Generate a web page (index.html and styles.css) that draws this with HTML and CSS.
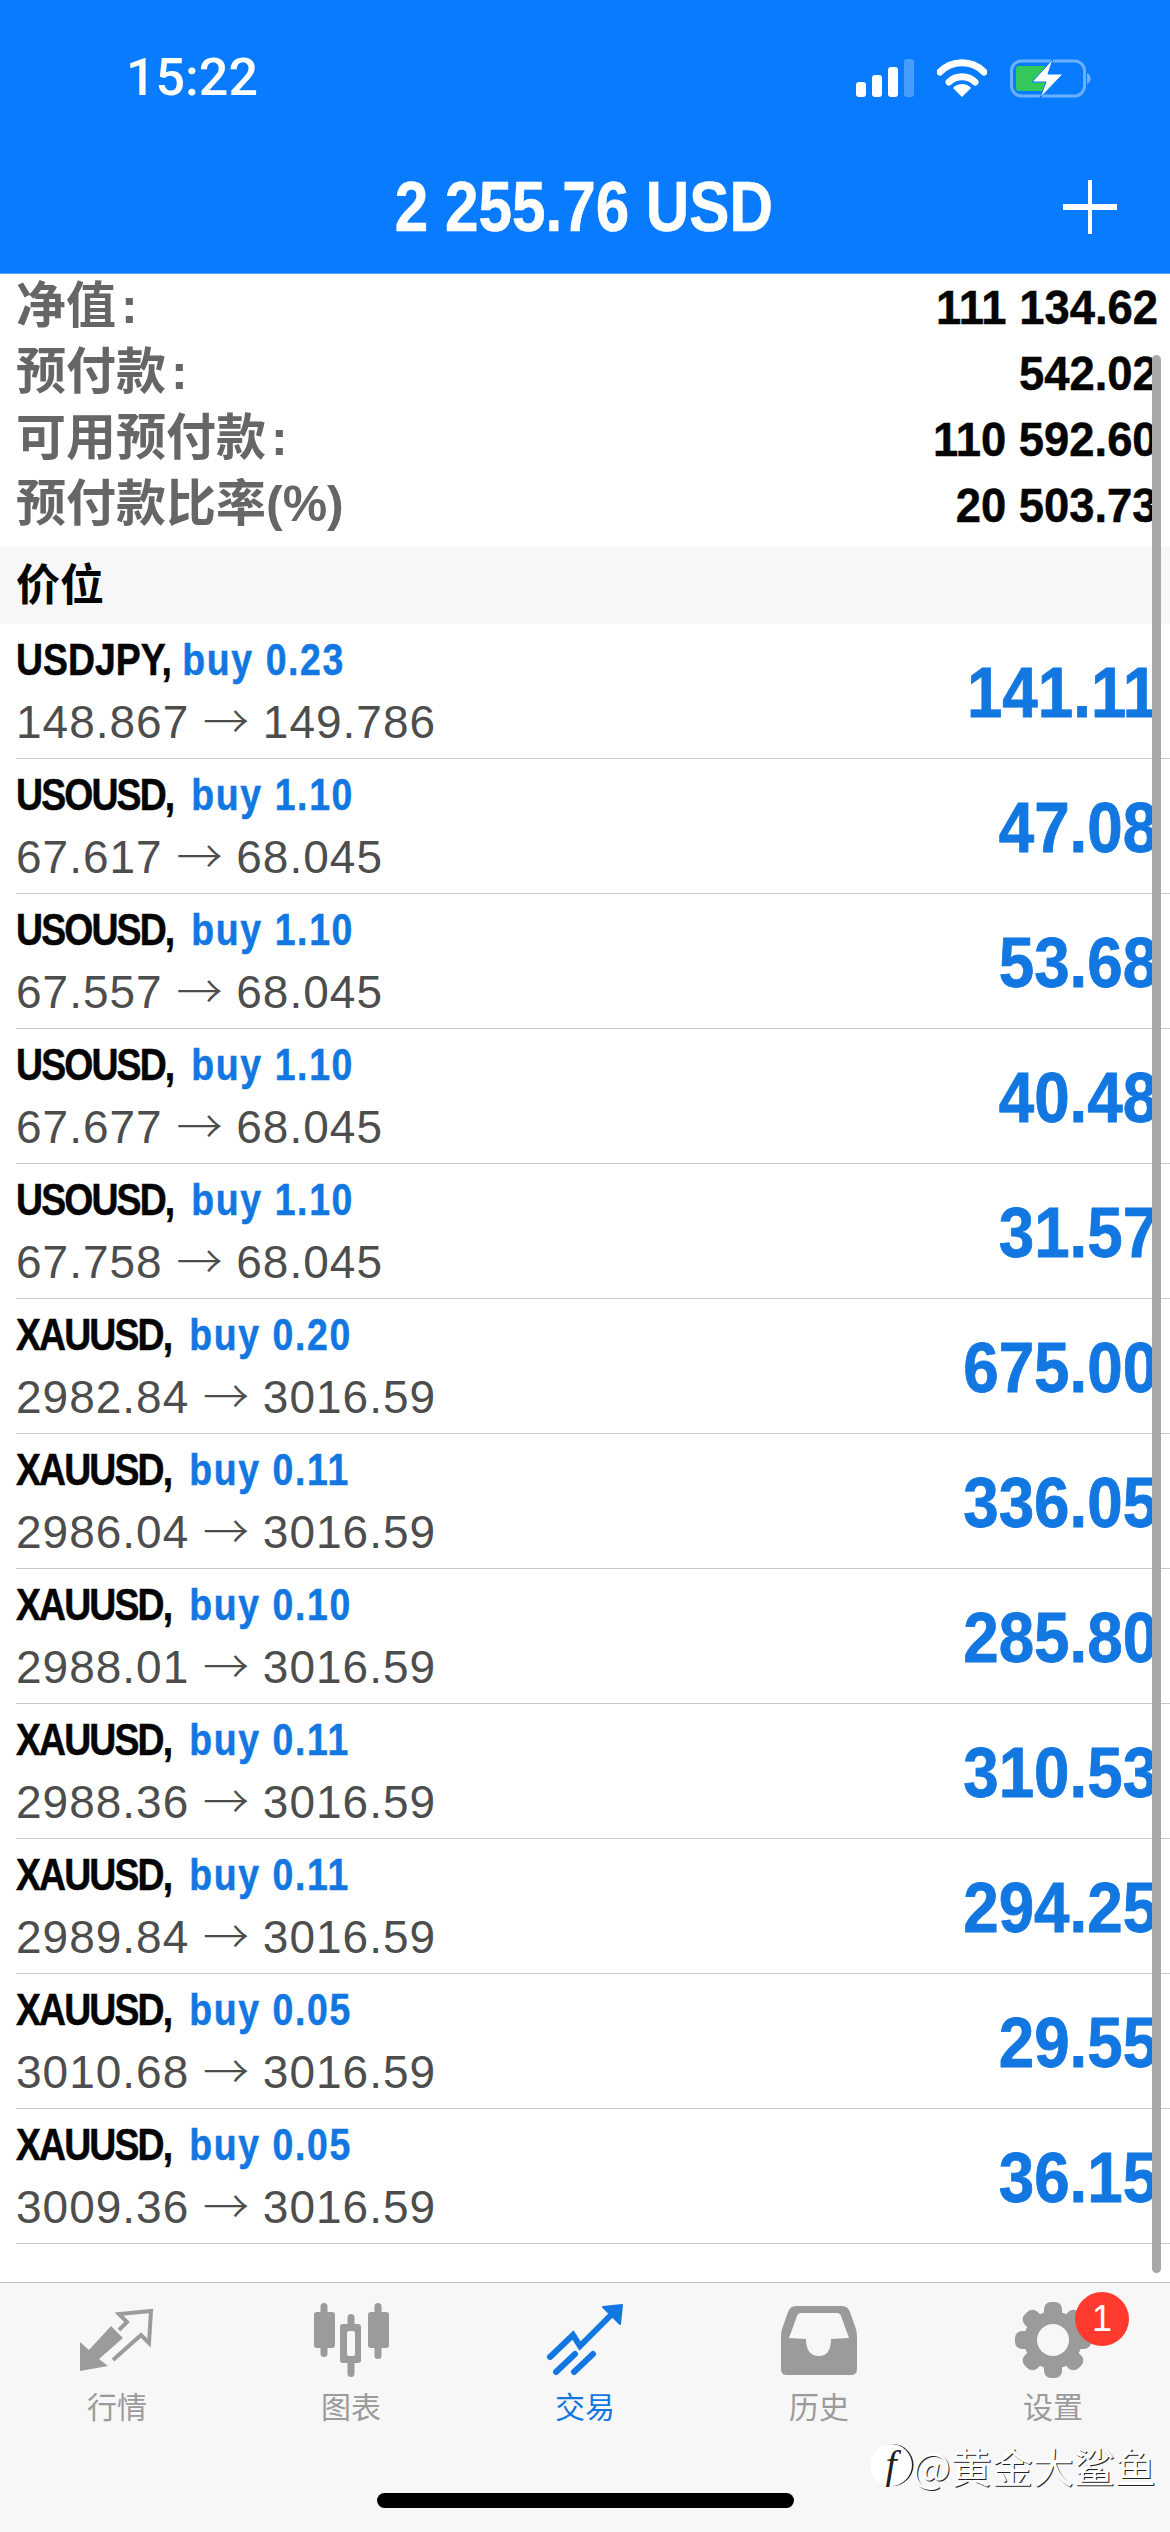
FILE: index.html
```html
<!DOCTYPE html>
<html lang="zh-CN">
<head>
    <meta charset="UTF-8">
    <meta name="viewport" content="width=device-width, initial-scale=1.0">
    <title>交易</title>
    <link rel="stylesheet" href="styles.css">
</head>
<body>
    <div class="screen">
        <header class="header">
            <div class="status">
                <div class="time">15:22</div>
                <div class="status-icons">
                    <svg width="58" height="38" viewBox="0 0 58 38">
                        <rect x="0" y="23" width="10" height="15" rx="3" fill="#fff"/>
                        <rect x="16" y="16" width="10" height="22" rx="3" fill="#fff"/>
                        <rect x="32" y="8" width="10" height="30" rx="3" fill="#fff"/>
                        <rect x="48" y="0" width="10" height="38" rx="3" fill="#fff" opacity="0.25"/>
                    </svg>
                    <svg width="50" height="38" viewBox="0 0 50 38">
                        <path d="M3 13 A31 31 0 0 1 47 13" fill="none" stroke="#fff" stroke-width="7" stroke-linecap="round"/>
                        <path d="M12 23 A19 19 0 0 1 38 23" fill="none" stroke="#fff" stroke-width="7" stroke-linecap="round"/>
                        <path d="M25 38 L16 29 A12 12 0 0 1 34 29 Z" fill="#fff"/>
                    </svg>
                    <svg width="82" height="39" viewBox="0 0 82 39">
                        <rect x="1.5" y="2" width="73" height="35" rx="10" fill="none" stroke="#6cb0fb" stroke-width="3"/>
                        <rect x="6" y="7" width="31" height="25" rx="3" fill="#34c759"/>
                        <path d="M77 14 A6 6 0 0 1 77 25 Z" fill="#6cb0fb"/>
                        <path d="M43 0 L22 23 L36 23 L30 39 L53 15 L38 15 Z" fill="#fff" stroke="#087bff" stroke-width="1"/>
                    </svg>
                </div>
            </div>
            <div class="title-row">
                <div></div>
                <div class="balance">2 255.76 USD</div>
                <svg class="plus" width="54" height="54" viewBox="0 0 54 54">
                    <path d="M27 0 V54" stroke="#fff" stroke-width="4"/>
                    <path d="M0 27 H54" stroke="#fff" stroke-width="6"/>
                </svg>
            </div>
        </header>

        <section class="summary">
            <div class="summary-row"><span class="label">净值<span class="colon">:</span></span><span class="amount">111 134.62</span></div>
            <div class="summary-row"><span class="label">预付款<span class="colon">:</span></span><span class="amount">542.02</span></div>
            <div class="summary-row"><span class="label">可用预付款<span class="colon">:</span></span><span class="amount">110 592.60</span></div>
            <div class="summary-row"><span class="label">预付款比率(%)</span><span class="amount">20 503.73</span></div>
        </section>

        <div class="section-head">价位</div>

        <main class="positions">
            <div class="position">
                <div class="info">
                    <div class="symbol"><span class="name">USDJPY,</span> <span class="side">buy 0.23</span></div>
                    <div class="prices">148.867 <span class="arrow">→</span> 149.786</div>
                </div>
                <div class="profit">141.11</div>
            </div>
            <div class="position">
                <div class="info">
                    <div class="symbol"><span class="name name-tight">USOUSD,</span> <span class="side">buy 1.10</span></div>
                    <div class="prices">67.617 <span class="arrow">→</span> 68.045</div>
                </div>
                <div class="profit">47.08</div>
            </div>
            <div class="position">
                <div class="info">
                    <div class="symbol"><span class="name name-tight">USOUSD,</span> <span class="side">buy 1.10</span></div>
                    <div class="prices">67.557 <span class="arrow">→</span> 68.045</div>
                </div>
                <div class="profit">53.68</div>
            </div>
            <div class="position">
                <div class="info">
                    <div class="symbol"><span class="name name-tight">USOUSD,</span> <span class="side">buy 1.10</span></div>
                    <div class="prices">67.677 <span class="arrow">→</span> 68.045</div>
                </div>
                <div class="profit">40.48</div>
            </div>
            <div class="position">
                <div class="info">
                    <div class="symbol"><span class="name name-tight">USOUSD,</span> <span class="side">buy 1.10</span></div>
                    <div class="prices">67.758 <span class="arrow">→</span> 68.045</div>
                </div>
                <div class="profit">31.57</div>
            </div>
            <div class="position">
                <div class="info">
                    <div class="symbol"><span class="name name-tight">XAUUSD,</span> <span class="side">buy 0.20</span></div>
                    <div class="prices">2982.84 <span class="arrow">→</span> 3016.59</div>
                </div>
                <div class="profit">675.00</div>
            </div>
            <div class="position">
                <div class="info">
                    <div class="symbol"><span class="name name-tight">XAUUSD,</span> <span class="side">buy 0.11</span></div>
                    <div class="prices">2986.04 <span class="arrow">→</span> 3016.59</div>
                </div>
                <div class="profit">336.05</div>
            </div>
            <div class="position">
                <div class="info">
                    <div class="symbol"><span class="name name-tight">XAUUSD,</span> <span class="side">buy 0.10</span></div>
                    <div class="prices">2988.01 <span class="arrow">→</span> 3016.59</div>
                </div>
                <div class="profit">285.80</div>
            </div>
            <div class="position">
                <div class="info">
                    <div class="symbol"><span class="name name-tight">XAUUSD,</span> <span class="side">buy 0.11</span></div>
                    <div class="prices">2988.36 <span class="arrow">→</span> 3016.59</div>
                </div>
                <div class="profit">310.53</div>
            </div>
            <div class="position">
                <div class="info">
                    <div class="symbol"><span class="name name-tight">XAUUSD,</span> <span class="side">buy 0.11</span></div>
                    <div class="prices">2989.84 <span class="arrow">→</span> 3016.59</div>
                </div>
                <div class="profit">294.25</div>
            </div>
            <div class="position">
                <div class="info">
                    <div class="symbol"><span class="name name-tight">XAUUSD,</span> <span class="side">buy 0.05</span></div>
                    <div class="prices">3010.68 <span class="arrow">→</span> 3016.59</div>
                </div>
                <div class="profit">29.55</div>
            </div>
            <div class="position">
                <div class="info">
                    <div class="symbol"><span class="name name-tight">XAUUSD,</span> <span class="side">buy 0.05</span></div>
                    <div class="prices">3009.36 <span class="arrow">→</span> 3016.59</div>
                </div>
                <div class="profit">36.15</div>
            </div>
        </main>

        <nav class="tabbar">
            <div class="tabs">
                <div class="tab">
                    <div class="tab-icon">
                        <svg width="74" height="64" viewBox="0 0 74 64">
                            <path d="M0 34 L9 42 L31 18 L43 30 L19 51 L28 58 L0 63 Z" fill="#9b9b9b"/>
                            <path d="M33 52 L61 27 L69 35 L71 3 L39 6 L47 14 L39 22" fill="none" stroke="#9b9b9b" stroke-width="4"/>
                        </svg>
                    </div>
                    <div class="tab-label">行情</div>
                </div>
                <div class="tab">
                    <div class="tab-icon">
                        <svg width="75" height="74" viewBox="0 0 75 74">
                            <rect x="6.5" y="0" width="7" height="54" rx="3.5" fill="#9b9b9b"/>
                            <rect x="0" y="9" width="21" height="36" rx="3" fill="#9b9b9b"/>
                            <rect x="33.5" y="11" width="7" height="63" rx="3.5" fill="#9b9b9b"/>
                            <rect x="26" y="21" width="21" height="39" rx="3" fill="#9b9b9b"/>
                            <rect x="33" y="28" width="8" height="25" rx="2" fill="#f7f7f7"/>
                            <rect x="60.5" y="0" width="7" height="56" rx="3.5" fill="#9b9b9b"/>
                            <rect x="54" y="9" width="21" height="36" rx="3" fill="#9b9b9b"/>
                        </svg>
                    </div>
                    <div class="tab-label">图表</div>
                </div>
                <div class="tab tab-active">
                    <div class="tab-icon">
                        <svg width="80" height="72" viewBox="0 0 80 72">
                            <path d="M5 53 L28 31 L35 42 L70 7" fill="none" stroke="#1277e1" stroke-width="6" stroke-linecap="round"/>
                            <path d="M58 3 L77 1 L75 20 Z" fill="#1277e1" stroke="#1277e1" stroke-width="2" stroke-linejoin="round"/>
                            <path d="M11 68 L30 50 M29 68 L48 50" fill="none" stroke="#1277e1" stroke-width="6" stroke-linecap="round"/>
                        </svg>
                    </div>
                    <div class="tab-label">交易</div>
                </div>
                <div class="tab">
                    <div class="tab-icon">
                        <svg width="76" height="69" viewBox="0 0 76 69">
                            <path fill-rule="evenodd" fill="#9b9b9b" d="M15 0 H61 Q67 0 69 6 L74 20 Q76 25 76 30 V63 Q76 69 70 69 H6 Q0 69 0 63 V30 Q0 25 2 20 L7 6 Q9 0 15 0 Z M20 7 Q17 7 16 10 L8 32 L25 33 Q25 50 38 50 Q50 50 50 33 L68 32 L60 10 Q59 7 56 7 Z"/>
                        </svg>
                    </div>
                    <div class="tab-label">历史</div>
                </div>
                <div class="tab">
                    <div class="tab-icon">
                        <svg width="76" height="76" viewBox="0 0 76 76">
                            <g fill="#9b9b9b">
                                <circle cx="38" cy="38" r="29"/>
                                <rect x="29" y="0" width="18" height="76" rx="7"/>
                                <rect x="29" y="0" width="18" height="76" rx="7" transform="rotate(45 38 38)"/>
                                <rect x="29" y="0" width="18" height="76" rx="7" transform="rotate(90 38 38)"/>
                                <rect x="29" y="0" width="18" height="76" rx="7" transform="rotate(135 38 38)"/>
                            </g>
                            <circle cx="38" cy="38" r="16" fill="#f7f7f7"/>
                        </svg>
                        <span class="badge">1</span>
                    </div>
                    <div class="tab-label">设置</div>
                </div>
            </div>
            <div class="home-bar"></div>
            <div class="watermark"><span class="wm-logo">f</span><span class="wm-text">@黄金大鲨鱼</span></div>
        </nav>

        <div class="scrollbar"></div>
    </div>
</body>
</html>
```
FILE: styles.css
```css
html, body {
    margin: 0;
    padding: 0;
    background: white;
}
.screen {
    position: relative;
    width: 1170px;
    height: 2532px;
    overflow: hidden;
    display: flex;
    flex-direction: column;
    font-family: "Liberation Sans", "Noto Sans CJK SC", sans-serif;
    background: white;
}

/* blue top bar */
.header {
    height: 273px;
    flex: none;
    background: #087bff;
    border-bottom: 1px solid #58a3f5;
    color: white;
}
.status {
    display: flex;
    justify-content: space-between;
    align-items: center;
    height: 38px;
    padding: 59px 78px 0 126px;
}
.time {
    font-family: Roboto, sans-serif;
    font-weight: 500;
    font-size: 52px;
    line-height: 38px;
}
.status-icons {
    display: flex;
    align-items: center;
    gap: 23px;
}
.title-row {
    display: grid;
    grid-template-columns: 1fr auto 1fr;
    align-items: center;
    height: 70px;
    margin-top: 75px;
    padding: 0 53px;
}
.balance {
    margin-right: 2px;
    font-weight: bold;
    font-size: 70px;
    line-height: 70px;
    white-space: nowrap;
    -webkit-text-stroke: 0.6px white;
    transform: scaleX(.86);
}
.plus {
    justify-self: end;
}

/* account numbers */
.summary {
    flex: none;
    padding-bottom: 9px;
}
.summary-row {
    display: flex;
    justify-content: space-between;
    align-items: center;
    height: 66px;
    padding: 0 12px 0 16px;
}
.label {
    margin-bottom: 12px;
    font-weight: bold;
    font-size: 50px;
    color: #666;
}
.colon {
    margin-left: 5px;
}
.amount {
    font-weight: bold;
    font-size: 48px;
    color: #050505;
    white-space: nowrap;
    -webkit-text-stroke: 0.5px #050505;
    transform: scaleX(.945);
    transform-origin: right center;
}
.section-head {
    flex: none;
    height: 77px;
    line-height: 77px;
    padding-left: 16px;
    background: #f7f7f7;
    font-weight: bold;
    font-size: 44px;
    color: #050505;
}

/* position rows */
.positions {
    flex: 1;
    padding-left: 16px;
}
.position {
    display: flex;
    justify-content: space-between;
    align-items: center;
    height: 134px;
    padding-right: 12px;
    border-bottom: 1px solid #c8c8c8;
}
.info {
    display: flex;
    flex-direction: column;
    gap: 8px;
}
.symbol {
    font-weight: bold;
    font-size: 44px;
    line-height: 50px;
    color: #050505;
    white-space: nowrap;
    -webkit-text-stroke: 0.5px #050505;
    transform: scaleX(.85);
    transform-origin: left center;
}
.name-tight {
    margin-right: 9px;
    letter-spacing: -2.2px;
}
.side {
    letter-spacing: 1.9px;
    color: #1277e1;
    -webkit-text-stroke: 0.5px #1277e1;
}
.prices {
    font-size: 46px;
    line-height: 50px;
    letter-spacing: 1px;
    color: #4d4d4d;
    white-space: nowrap;
}
.arrow {
    font-family: "Noto Sans CJK SC", sans-serif;
    font-weight: 300;
    letter-spacing: 0;
}
.profit {
    padding-top: 4px;
    font-weight: bold;
    font-size: 70px;
    line-height: 70px;
    color: #1277e1;
    white-space: nowrap;
    -webkit-text-stroke: 0.8px #1277e1;
    transform: scaleX(.91);
    transform-origin: right center;
}

/* bottom tabs */
.tabbar {
    position: relative;
    flex: none;
    height: 230px;
    padding-top: 19px;
    background: #f7f7f7;
    border-top: 1px solid #bcbcbc;
}
.tabs {
    display: grid;
    grid-template-columns: repeat(5, 1fr);
}
.tab {
    display: flex;
    flex-direction: column;
    align-items: center;
    gap: 12px;
    font-size: 30px;
    color: #9b9b9b;
}
.tab-active {
    color: #1277e1;
}
.tab-icon {
    position: relative;
    display: flex;
    align-items: center;
    justify-content: center;
    height: 76px;
}
.tab-label {
    font-family: "Noto Sans CJK SC", sans-serif;
    line-height: 30px;
}
.badge {
    position: absolute;
    top: -10px;
    left: 60px;
    width: 54px;
    height: 54px;
    border-radius: 50%;
    background: #ff3b30;
    color: white;
    font-family: "Liberation Sans", sans-serif;
    font-size: 36px;
    line-height: 54px;
    text-align: center;
}
.home-bar {
    width: 417px;
    height: 15px;
    margin: 73px auto 0;
    border-radius: 8px;
    background: black;
}

/* overlays */
.watermark {
    position: absolute;
    left: 870px;
    top: 159px;
    display: flex;
    align-items: center;
    gap: 0;
}
.wm-logo {
    width: 42px;
    height: 42px;
    border-radius: 50%;
    background: white;
    box-shadow: 1.5px 0 0 #222;
    color: #222;
    font-family: "Liberation Serif", serif;
    font-style: italic;
    font-size: 40px;
    line-height: 42px;
    text-align: center;
}
.wm-text {
    font-family: "Noto Sans CJK SC", sans-serif;
    font-size: 41px;
    line-height: 46px;
    color: white;
    text-shadow: 1px 1px 0 #222;
    white-space: nowrap;
}
.scrollbar {
    position: absolute;
    left: 1152px;
    top: 355px;
    width: 9px;
    height: 1918px;
    border-radius: 5px;
    background: #a8a8a8;
}
```
